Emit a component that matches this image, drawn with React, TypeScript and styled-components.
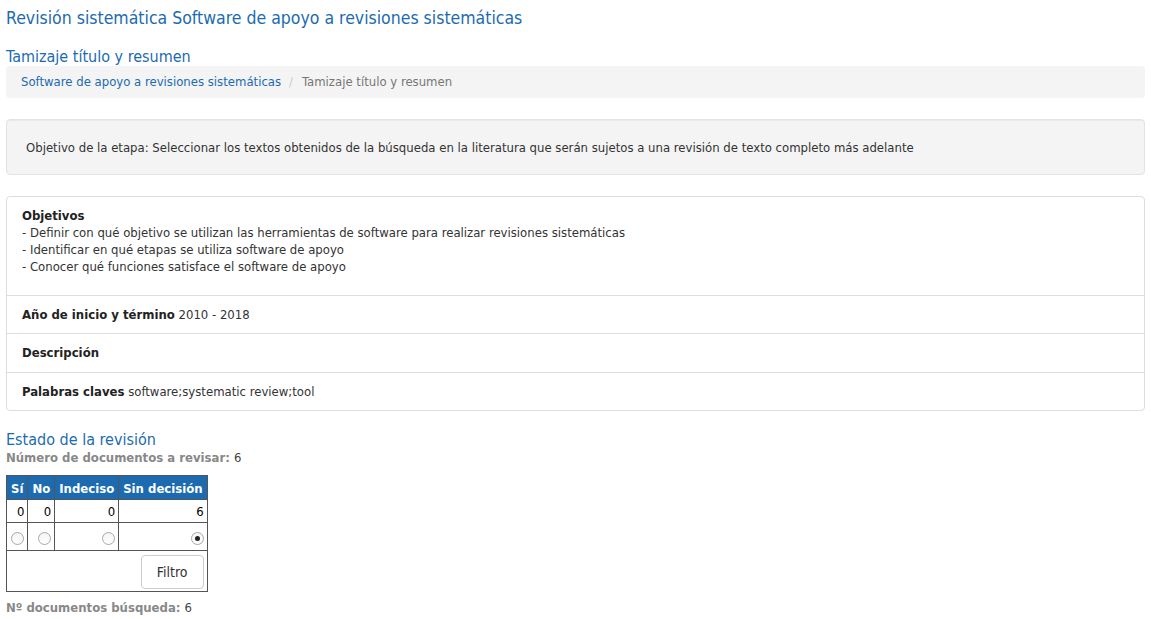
import React from "react";
import styled, { createGlobalStyle } from "styled-components";

const Global = createGlobalStyle`
  html, body { margin: 0; padding: 0; background: #fff; }
  body {
    font-family: "DejaVu Sans Condensed", "DejaVu Sans", sans-serif;
    font-size: 13px;
    line-height: 17px;
    color: #333;
  }
  * { box-sizing: border-box; }
`;

const Page = styled.div`
  padding: 0 6px 8px;
`;

const Title = styled.h1`
  margin: 0;
  padding-top: 7px;
  font-size: 17.5px;
  line-height: 22px;
  font-weight: normal;
  color: #1c6bb0;
`;

const Subtitle = styled.h2<{ $top?: number }>`
  margin: ${(p) => p.$top ?? 0}px 0 0;
  font-size: 16px;
  line-height: 18px;
  font-weight: normal;
  color: #1c6bb0;
`;

const Breadcrumb = styled.ol`
  list-style: none;
  margin: 0 0 21px;
  padding: 7px 15px 8px;
  background: #f4f4f4;
  border-radius: 4px;
  display: flex;
  line-height: 17px;
  & > li + li::before {
    content: "/";
    color: #ccc;
    padding: 0 9px 0 8px;
  }
`;

const Crumb = styled.li<{ $active?: boolean }>`
  color: ${(p) => (p.$active ? "#777" : "#1c6bb0")};
`;

const Well = styled.div`
  background: #f4f4f4;
  border: 1px solid #e3e3e3;
  border-radius: 4px;
  padding: 19px 19px 18px;
  margin-bottom: 21px;
  box-shadow: inset 0 1px 1px rgba(0, 0, 0, 0.05);
`;

const Panel = styled.ul`
  list-style: none;
  margin: 0 0 20px;
  padding: 0;
  border: 1px solid #ddd;
  border-radius: 4px;
  & > li + li { border-top: 1px solid #ddd; }
`;

const Item = styled.li<{ $extra?: number }>`
  padding: 10px 15px ${(p) => 10 + (p.$extra ?? 0)}px;
`;

const Label = styled.b`
  font-weight: bold;
  color: #222;
`;

const Stat = styled.div<{ $top?: number }>`
  margin-top: ${(p) => p.$top ?? 0}px;
  font-weight: bold;
  color: #888;
  span { font-weight: normal; color: #444; }
`;

const Table = styled.table`
  border-collapse: collapse;
  margin-top: 9px;
  color: #000;
`;

const Th = styled.th`
  background: #1c6bb0;
  color: #fff;
  font-weight: bold;
  border: 1px solid #555;
  padding: 3px 4px 2px;
  height: 24px;
  text-align: center;
`;

const Td = styled.td<{ $h?: number }>`
  border: 1px solid #555;
  padding: 2px 3px;
  text-align: right;
  height: ${(p) => p.$h ?? 23}px;
`;

const Radio = styled.input.attrs({ type: "radio" })`
  appearance: none;
  -webkit-appearance: none;
  margin: 3px 0 0;
  width: 13px;
  height: 13px;
  border: 1px solid #a8a8a8;
  border-radius: 50%;
  background: linear-gradient(#f4f4f4, #fff);
  position: relative;
  vertical-align: middle;
  &:checked::after {
    content: "";
    position: absolute;
    left: 3px;
    top: 3px;
    width: 5px;
    height: 5px;
    border-radius: 50%;
    background: #222;
  }
`;

const Button = styled.button`
  display: inline-block;
  vertical-align: top;
  font-family: inherit;
  font-size: 14px;
  line-height: 20px;
  color: #333;
  background: #fff;
  border: 1px solid #ccc;
  border-radius: 4px;
  padding: 6px 12px;
  height: 34px;
  width: 63px;
  margin: 2px 0 0;
`;

export default function App() {
  const counts = [0, 0, 0, 6];
  return (
    <>
      <Global />
      <Page>
        <Title>Revisión sistemática Software de apoyo a revisiones sistemáticas</Title>
        <Subtitle $top={19}>Tamizaje título y resumen</Subtitle>
        <Breadcrumb>
          <Crumb>Software de apoyo a revisiones sistemáticas</Crumb>
          <Crumb $active>Tamizaje título y resumen</Crumb>
        </Breadcrumb>
        <Well>
          Objetivo de la etapa: Seleccionar los textos obtenidos de la búsqueda en la literatura que serán sujetos a una revisión de texto completo más adelante
        </Well>
        <Panel>
          <Item $extra={10}>
            <Label>Objetivos</Label>
            <br />- Definir con qué objetivo se utilizan las herramientas de software para realizar revisiones sistemáticas
            <br />- Identificar en qué etapas se utiliza software de apoyo
            <br />- Conocer qué funciones satisface el software de apoyo
          </Item>
          <Item>
            <Label>Año de inicio y término</Label> 2010 - 2018
          </Item>
          <Item $extra={1}>
            <Label>Descripción</Label>
          </Item>
          <Item>
            <Label>Palabras claves</Label> software;systematic review;tool
          </Item>
        </Panel>
        <Subtitle>Estado de la revisión</Subtitle>
        <Stat>
          Número de documentos a revisar: <span>6</span>
        </Stat>
        <Table>
          <thead>
            <tr>
              <Th>Sí</Th>
              <Th>No</Th>
              <Th>Indeciso</Th>
              <Th>Sin decisión</Th>
            </tr>
          </thead>
          <tbody>
            <tr>
              {counts.map((c, i) => (
                <Td key={i}>{c}</Td>
              ))}
            </tr>
            <tr>
              {counts.map((c, i) => (
                <Td key={i} $h={28}>
                  <Radio name="estado" defaultChecked={i === 3} />
                </Td>
              ))}
            </tr>
            <tr>
              <Td colSpan={4} $h={40}>
                <Button>Filtro</Button>
              </Td>
            </tr>
          </tbody>
        </Table>
        <Stat $top={7}>
          Nº documentos búsqueda: <span>6</span>
        </Stat>
      </Page>
    </>
  );
}
